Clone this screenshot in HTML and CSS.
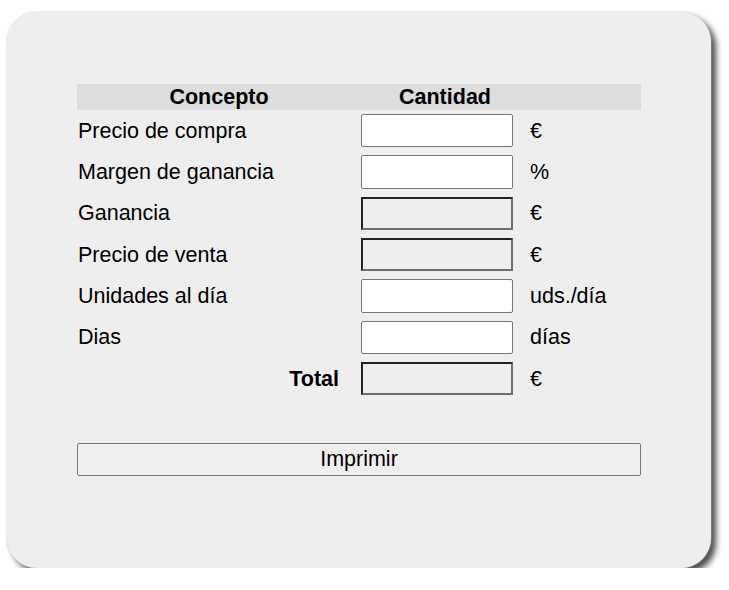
FILE: index.html
```
<!DOCTYPE html>
<html lang="es">
<head>
<meta charset="utf-8">
<title>Calculadora</title>
<link rel="stylesheet" href="styles.css">
</head>
<body>
<div class="card">
  <table class="calc">
    <colgroup>
      <col class="c1"><col class="c2"><col class="c3">
    </colgroup>
    <thead>
      <tr><th>Concepto</th><th>Cantidad</th><th></th></tr>
    </thead>
    <tbody>
      <tr><td class="label">Precio de compra</td><td><input class="field" type="text"></td><td class="unit">€</td></tr>
      <tr><td class="label">Margen de ganancia</td><td><input class="field" type="text"></td><td class="unit">%</td></tr>
      <tr><td class="label">Ganancia</td><td><input class="field ro" type="text" readonly></td><td class="unit">€</td></tr>
      <tr><td class="label">Precio de venta</td><td><input class="field ro" type="text" readonly></td><td class="unit">€</td></tr>
      <tr><td class="label">Unidades al día</td><td><input class="field" type="text"></td><td class="unit">uds./día</td></tr>
      <tr><td class="label">Dias</td><td><input class="field" type="text"></td><td class="unit">días</td></tr>
      <tr><td class="label total">Total</td><td><input class="field ro" type="text" readonly></td><td class="unit">€</td></tr>
    </tbody>
  </table>
  <button class="print" type="button">Imprimir</button>
</div>
</body>
</html>
```
FILE: styles.css
```
html, body {
  margin: 0;
  padding: 0;
  background: #ffffff;
}
body {
  font-family: "Liberation Sans", Arial, sans-serif;
  font-size: 21.5px;
  color: #000;
}
.card {
  box-sizing: border-box;
  width: 704px;
  height: 556px;
  margin: 12px 0 0 7px;
  padding: 72px 70px 0 70px;
  background: #eeeeee;
  border-radius: 30px;
  box-shadow: 0 0 2px #cfcfcf, 5px 5px 6px #4a4a4a;
}
.calc {
  width: 564px;
  border-collapse: collapse;
  border-spacing: 0;
  table-layout: fixed;
}
.c1 { width: 284px; }
.c2 { width: 168px; }
.c3 { width: 112px; }
.calc th {
  background: #dddddd;
  font-weight: bold;
  height: 26px;
  line-height: 26px;
  padding: 0;
  text-align: center;
}
.calc td {
  padding: 4px 0;
  line-height: 24px;
  vertical-align: middle;
  white-space: nowrap;
}
.label {
  padding-left: 1px !important;
}
.total {
  font-weight: bold;
  text-align: right;
  padding-right: 22px !important;
}
.unit {
  padding-left: 1px !important;
}
.field {
  display: block;
  box-sizing: border-box;
  width: 152px;
  height: 33.33px;
  margin: 0;
  padding: 0 4px;
  font: inherit;
  background: #ffffff;
  border: 1px solid #767676;
  border-radius: 2px;
}
.field.ro {
  background: #eeeeee;
  border-radius: 0;
  border-width: 2px;
  border-style: solid;
  border-color: #222222 #6e6e6e #6e6e6e #222222;
}
.print {
  display: block;
  box-sizing: border-box;
  width: 564px;
  height: 33px;
  margin: 44px 0 0 0;
  padding: 0;
  font: inherit;
  color: #000;
  background: #efefef;
  border: 1px solid #767676;
  border-radius: 2px;
}
```
